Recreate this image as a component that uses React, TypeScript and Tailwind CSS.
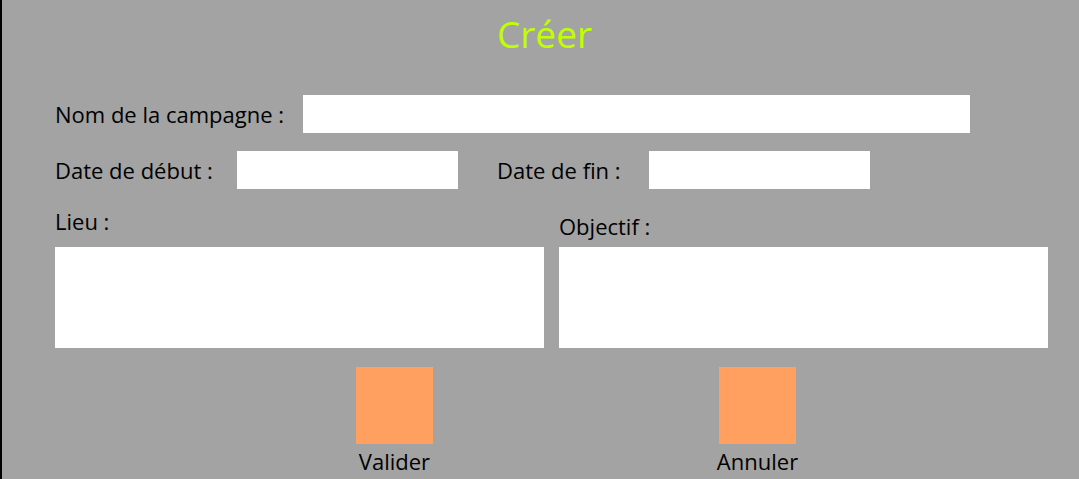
export default function App() {
  return (
    <div
      className="h-[479px] w-full overflow-hidden border-l-2 border-black bg-[#a3a3a3] text-black"
      style={{ fontFamily: '"Open Sans", "Noto Sans", sans-serif' }}
    >
      {/* Title */}
      <h1 className="pl-[8px] pt-[10px] text-center text-[37px] leading-[48px] text-[#c0ff00]">Créer</h1>

      <div className="pl-[53px]">
        {/* Nom */}
        <div className="mt-[37px] flex h-[38px] items-center">
          <label className="w-[248px] text-[22px] leading-[28px]">Nom de la campagne :</label>
          <div className="h-[38px] w-[667px] bg-white" />
        </div>

        {/* Dates */}
        <div className="mt-[18px] flex h-[38px] items-center">
          <label className="w-[182px] whitespace-nowrap text-[22px] leading-[28px]">Date de début :</label>
          <div className="h-[38px] w-[221px] bg-white" />
          <label className="ml-[39px] w-[152px] text-[22px] leading-[28px]">Date de fin :</label>
          <div className="h-[38px] w-[221px] bg-white" />
        </div>

        {/* Lieu / Objectif */}
        <div className="mt-[18px] flex gap-[15px]">
          <div className="flex w-[489px] flex-col">
            <label className="h-[40px] text-[22px] leading-[28px]">Lieu :</label>
            <div className="h-[101px] w-[489px] bg-white" />
          </div>
          <div className="flex w-[489px] flex-col">
            <label className="h-[40px] pt-[5px] text-[22px] leading-[28px]">Objectif :</label>
            <div className="h-[101px] w-[489px] bg-white" />
          </div>
        </div>
      </div>

      {/* Buttons */}
      <div className="mt-[19px] flex">
        <div className="ml-[354px] flex w-[77px] flex-col items-center">
          <button className="h-[77px] w-[77px] bg-[#ffa060]" />
          <span className="mt-[3px] whitespace-nowrap text-[22px] leading-[28px]">Valider</span>
        </div>
        <div className="ml-[286px] flex w-[77px] flex-col items-center">
          <button className="h-[77px] w-[77px] bg-[#ffa060]" />
          <span className="mt-[3px] whitespace-nowrap text-[22px] leading-[28px]">Annuler</span>
        </div>
      </div>
    </div>
  );
}
